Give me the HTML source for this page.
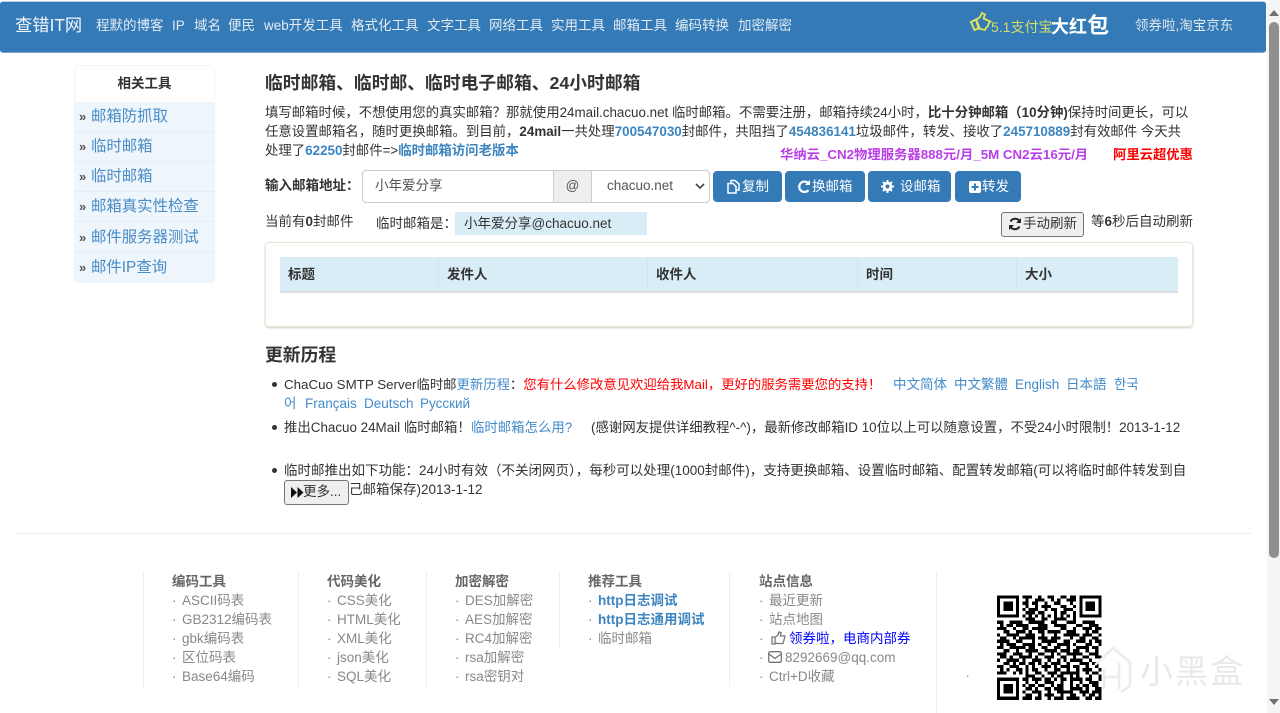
<!DOCTYPE html>
<html lang="zh">
<head>
<meta charset="utf-8">
<title>临时邮箱</title>
<style>
html,body{margin:0;padding:0;background:#fff;overflow:hidden}
body{width:1280px;height:713px;position:relative;font-family:"Liberation Sans","Noto Sans CJK SC",sans-serif;font-size:13.5px;color:#333;filter:blur(.3px)}
.t{position:absolute;white-space:nowrap;line-height:20px;margin-top:1px}
a,.l{color:#428bca;text-decoration:none}
.b{position:absolute}
.nav{color:#e3ebf3;top:15px}
.side{position:absolute;left:74px;width:141px;background:#eef5fb;border-bottom:1px solid #e6edf3;box-sizing:border-box}
.side i{position:absolute;left:5px;top:4px;font-style:normal;font-size:13px;font-weight:bold;color:#555;line-height:22px}
.side span{position:absolute;left:17px;top:3px;font-size:15.4px;line-height:24px;color:#4a8cc6;white-space:nowrap}
.btn{position:absolute;top:171px;height:31px;background:#337ab7;border:1px solid #337ab7;border-radius:4px;box-sizing:border-box;color:#fff;line-height:29px;white-space:nowrap}
.btn svg{position:absolute;top:7px}
.btn span{position:absolute;top:0}
.th{position:absolute;top:257px;height:36px;background:#d9edf7;border-bottom:2px solid #ddd;border-right:1px solid #d2e4ec;box-sizing:border-box;font-weight:bold;padding-left:8px;line-height:36px}
.v{position:absolute;width:1px;background:#eee}
.ft{color:#666;font-weight:bold}
.fi{color:#888}
.fi i{display:inline-block;width:10px;font-style:normal}
.p{font-size:13.4px}
</style>
</head>
<body>
<div class="b" style="left:0;top:1px;width:1266px;height:52px;background:#337ab7;border-top:1px solid #b9cfe2;border-bottom:1px solid #7aa6cf;box-sizing:border-box;border-radius:3px"></div>
<div class="t" style="left:15px;top:14px;font-size:17.3px;color:#f2f6fa">查错IT网</div>
<div class="t nav" style="left:96px">程默的博客</div>
<div class="t nav" style="left:172px">IP</div>
<div class="t nav" style="left:194px">域名</div>
<div class="t nav" style="left:228px">便民</div>
<div class="t nav" style="left:264px">web开发工具</div>
<div class="t nav" style="left:351px">格式化工具</div>
<div class="t nav" style="left:427px">文字工具</div>
<div class="t nav" style="left:489px">网络工具</div>
<div class="t nav" style="left:551px">实用工具</div>
<div class="t nav" style="left:613px">邮箱工具</div>
<div class="t nav" style="left:675px">编码转换</div>
<div class="t nav" style="left:738px">加密解密</div>
<svg class="b" style="left:969px;top:12px" width="24" height="22" viewBox="0 0 24 22"><path d="M7 8l4-3 2-4 3 1.500-1.500 4 7 3-2 2-.5 2.500-2 2-1 2-6.500-1.500z" fill="none" stroke="#dfe35e" stroke-width="1.800"/><path d="M2 10l5-2.500 3.500 8.500-5 2z" fill="none" stroke="#dfe35e" stroke-width="2"/></svg>
<div class="t" style="left:991px;top:16px;font-size:14px;color:#d5dd6a">5.1支付宝</div>
<div class="t" style="left:1051px;top:15px;font-size:18px;font-weight:bold;color:#fff">大红<span style="font-size:22px">包</span></div>
<div class="t" style="left:1135px;top:15px;color:#dfe7ef">领券啦,淘宝京东</div>

<div class="b" style="left:1267px;top:0;width:13px;height:713px;background:#f5f5f5"></div>
<div class="b" style="left:1269px;top:22px;width:10px;height:536px;background:#8f8f8f;border-radius:5px"></div>
<svg class="b" style="left:1268px;top:9px" width="12" height="8"><path d="M6 1l5 6H1z" fill="#6f6f6f"/></svg>
<svg class="b" style="left:1268px;top:698px" width="12" height="8"><path d="M6 7L1 1h10z" fill="#6f6f6f"/></svg>

<div class="b" style="left:74px;top:65px;width:141px;height:37px;border:1px solid #f5f5f5;border-bottom:none;box-sizing:border-box;border-radius:4px 4px 0 0;text-align:center;font-weight:bold;line-height:35px;color:#333">相关工具</div>
<div class="side" style="top:102px;height:30px"><i>»</i><span style="top:3px">邮箱防抓取</span></div>
<div class="side" style="top:132px;height:30px"><i>»</i><span style="top:3px">临时邮箱</span></div>
<div class="side" style="top:162px;height:30px"><i>»</i><span style="top:3px">临时邮箱</span></div>
<div class="side" style="top:192px;height:30px"><i>»</i><span style="top:3px">邮箱真实性检查</span></div>
<div class="side" style="top:222px;height:30px"><i style="top:5px">»</i><span style="top:4px">邮件服务器测试</span></div>
<div class="side" style="top:252px;height:31px;border-radius:0 0 4px 4px;border-bottom:none"><i style="top:5px">»</i><span style="top:4px">邮件IP查询</span></div>

<div class="t" style="left:265px;top:72px;font-size:17.8px;font-weight:bold">临时邮箱、临时邮、临时电子邮箱、24小时邮箱</div>
<div class="t p" style="left:265px;top:102px">填写邮箱时候&#65292;不想使用您的真实邮箱&#65311;那就使用24mail.chacuo.net 临时邮箱。不需要注册&#65292;邮箱持续24小时&#65292;<b>比十分钟邮箱&#65288;10分钟)</b>保持时间更长&#65292;可以</div>
<div class="t p" style="left:265px;top:121px">任意设置邮箱名&#65292;随时更换邮箱。到目前&#65292;<b>24mail</b>一共处理<b style="color:#3d85c0">700547030</b>封邮件&#65292;共阻挡了<b style="color:#3d85c0">454836141</b>垃圾邮件&#65292;转发、接收了<b style="color:#3d85c0">245710889</b>封有效邮件 今天共</div>
<div class="t p" style="left:265px;top:140px">处理了<b style="color:#3d85c0">62250</b>封邮件=&gt;<b style="color:#3d85c0">临时邮箱访问老版本</b></div>
<div class="t" style="left:780px;top:144px;font-size:13.33px;font-weight:bold;color:#b93ee8">华纳云_CN2物理服务器888元/月_5M CN2云16元/月</div>
<div class="t" style="left:1113px;top:144px;font-size:13.33px;font-weight:bold;color:#f00">阿里云超优惠</div>

<div class="t" style="left:265px;top:175px;font-weight:bold">输入邮箱地址&#65306;</div>
<div class="b" style="left:362px;top:170px;width:348px;height:33px;border:1px solid #ccc;border-radius:4px;box-sizing:border-box"></div>
<div class="t" style="left:375px;top:175px;color:#555">小年爱分享</div>
<div class="b" style="left:553px;top:171px;width:39px;height:31px;background:#eee;border-left:1px solid #ccc;border-right:1px solid #ccc;box-sizing:border-box;text-align:center;line-height:30px;color:#555">@</div>
<div class="t" style="left:607px;top:175px;color:#555">chacuo.net</div>
<svg class="b" style="left:695px;top:183px" width="10" height="7"><path d="M1 1l4 4 4-4" fill="none" stroke="#444" stroke-width="1.600"/></svg>

<div class="btn" style="left:713px;width:69px"><svg style="left:12px" width="15" height="15" viewBox="0 0 15 15"><path d="M5 4V1.500h4L13 5v6h-3M2 4.500h5l3 3V14H2z" fill="none" stroke="#fff" stroke-width="1.500"/></svg><span style="left:28px">复制</span></div>
<div class="btn" style="left:785px;width:80px"><svg style="left:11px" width="14" height="15" viewBox="0 0 14 15"><path d="M11.500 4.500A5.200 5.200 0 1 0 11.500 11" fill="none" stroke="#fff" stroke-width="2.200"/><path d="M13 1v5H8z" fill="#fff"/></svg><span style="left:26px">换邮箱</span></div>
<div class="btn" style="left:868px;width:83px"><svg style="left:11px" width="15" height="15" viewBox="0 0 15 15"><circle cx="7.500" cy="7.500" r="3.500" fill="none" stroke="#fff" stroke-width="2.500"/><path d="M7.500 1v13M1 7.500h13M3 3l9 9M12 3l-9 9" stroke="#fff" stroke-width="2"/><circle cx="7.500" cy="7.500" r="2" fill="#337ab7"/></svg><span style="left:31px">设邮箱</span></div>
<div class="btn" style="left:955px;width:66px"><svg style="left:12px" width="14" height="15" viewBox="0 0 14 15"><rect x="1" y="2" width="12" height="12" rx="2" fill="#fff"/><path d="M7 4.500v7M3.500 8h7" stroke="#337ab7" stroke-width="2"/></svg><span style="left:26px">转发</span></div>

<div class="t" style="left:265px;top:211px">当前有<b>0</b>封邮件</div>
<div class="t" style="left:376px;top:213px">临时邮箱是&#65306;</div>
<div class="b" style="left:455px;top:212px;width:192px;height:23px;background:#d9edf7"></div>
<div class="t" style="left:464px;top:213px">小年爱分享@chacuo.net</div>
<div class="b" style="left:1001px;top:212px;width:83px;height:25px;background:#efefef;border:1px solid #767676;border-radius:3px;box-sizing:border-box"></div>
<svg class="b" style="left:1008px;top:217px" width="14" height="14" viewBox="0 0 14 14"><path d="M12 5A5.300 5.300 0 0 0 2.500 4.500M2 9a5.300 5.300 0 0 0 9.500.500" fill="none" stroke="#222" stroke-width="2"/><path d="M13 1v5H8zM1 13V8h5z" fill="#222"/></svg>
<div class="t" style="left:1023px;top:213px;color:#333">手动刷新</div>
<div class="t" style="left:1091px;top:211px">等<b>6</b>秒后自动刷新</div>

<div class="b" style="left:265px;top:242px;width:928px;height:85px;border:1px solid #e3e8d8;border-radius:4px;box-sizing:border-box;box-shadow:0 1px 2px #c9d2bf"></div>
<div class="th" style="left:280px;width:159px">标题</div>
<div class="th" style="left:439px;width:209px">发件人</div>
<div class="th" style="left:648px;width:210px">收件人</div>
<div class="th" style="left:858px;width:159px">时间</div>
<div class="th" style="left:1017px;width:161px;border-right:none">大小</div>

<div class="t" style="left:265px;top:344px;font-size:17.8px;font-weight:bold">更新历程</div>

<div class="b" style="left:272px;top:382px;width:5px;height:5px;border-radius:50%;background:#333"></div>
<div class="t" style="left:284px;top:374px;font-size:13.35px">ChaCuo SMTP Server临时邮<span class="l">更新历程</span>&#65306;<span style="color:#f00">您有什么修改意见欢迎给我Mail&#65292;更好的服务需要您的支持&#65281;</span></div>
<div class="t l" style="left:893px;top:374px">中文简体</div>
<div class="t l" style="left:954px;top:374px">中文繁體</div>
<div class="t l" style="left:1015px;top:374px">English</div>
<div class="t l" style="left:1066px;top:374px">日本語</div>
<div class="t l" style="left:1114px;top:374px;font-family:'Liberation Sans','Noto Sans CJK KR',sans-serif">한국</div>
<div class="t l" style="left:284px;top:393px;font-family:'Liberation Sans','Noto Sans CJK KR',sans-serif">어</div>
<div class="t l" style="left:305px;top:393px">Français</div>
<div class="t l" style="left:364px;top:393px">Deutsch</div>
<div class="t l" style="left:420px;top:393px">Русский</div>

<div class="b" style="left:272px;top:425px;width:5px;height:5px;border-radius:50%;background:#333"></div>
<div class="t p" style="left:284px;top:417px">推出Chacuo 24Mail 临时邮箱&#65281;</div>
<div class="t l p" style="left:471px;top:417px">临时邮箱怎么用?</div>
<div class="t p" style="left:591px;top:417px">(感谢网友提供详细教程^-^)&#65292;最新修改邮箱ID 10位以上可以随意设置&#65292;不受24小时限制&#65281;2013-1-12</div>

<div class="b" style="left:272px;top:468px;width:5px;height:5px;border-radius:50%;background:#333"></div>
<div class="t" style="left:284px;top:460px">临时邮推出如下功能&#65306;24小时有效&#65288;不关闭网页&#65289;&#65292;每秒可以处理(1000封邮件)&#65292;支持更换邮箱、设置临时邮箱、配置转发邮箱(可以将临时邮件转发到自</div>
<div class="b" style="left:284px;top:480px;width:65px;height:25px;background:#efefef;border:1px solid #767676;border-radius:3px;box-sizing:border-box"></div>
<svg class="b" style="left:291px;top:486px" width="13" height="13" viewBox="0 0 13 13"><path d="M0 1l6 5.500L0 12zM6.500 1l6 5.500-6 5.500z" fill="#111"/></svg>
<div class="t" style="left:303px;top:481px;color:#333">更多...</div>
<div class="t" style="left:349px;top:479px">己邮箱保存)2013-1-12</div>

<div class="b" style="left:15px;top:533px;width:1236px;height:1px;background:#eee"></div>

<div class="v" style="left:143px;top:572px;height:115px"></div>
<div class="v" style="left:298px;top:572px;height:115px"></div>
<div class="v" style="left:426px;top:572px;height:115px"></div>
<div class="v" style="left:559px;top:572px;height:76px"></div>
<div class="v" style="left:729px;top:572px;height:115px"></div>
<div class="v" style="left:936px;top:572px;height:141px"></div>

<div class="t ft" style="left:172px;top:571px">编码工具</div>
<div class="t fi" style="left:172px;top:590px"><i>·</i>ASCII码表</div>
<div class="t fi" style="left:172px;top:609px"><i>·</i>GB2312编码表</div>
<div class="t fi" style="left:172px;top:628px"><i>·</i>gbk编码表</div>
<div class="t fi" style="left:172px;top:647px"><i>·</i>区位码表</div>
<div class="t fi" style="left:172px;top:666px"><i>·</i>Base64编码</div>

<div class="t ft" style="left:327px;top:571px">代码美化</div>
<div class="t fi" style="left:327px;top:590px"><i>·</i>CSS美化</div>
<div class="t fi" style="left:327px;top:609px"><i>·</i>HTML美化</div>
<div class="t fi" style="left:327px;top:628px"><i>·</i>XML美化</div>
<div class="t fi" style="left:327px;top:647px"><i>·</i>json美化</div>
<div class="t fi" style="left:327px;top:666px"><i>·</i>SQL美化</div>

<div class="t ft" style="left:455px;top:571px">加密解密</div>
<div class="t fi" style="left:455px;top:590px"><i>·</i>DES加解密</div>
<div class="t fi" style="left:455px;top:609px"><i>·</i>AES加解密</div>
<div class="t fi" style="left:455px;top:628px"><i>·</i>RC4加解密</div>
<div class="t fi" style="left:455px;top:647px"><i>·</i>rsa加解密</div>
<div class="t fi" style="left:455px;top:666px"><i>·</i>rsa密钥对</div>

<div class="t ft" style="left:588px;top:571px">推荐工具</div>
<div class="t fi" style="left:588px;top:590px"><i>·</i><b style="color:#3d85c0">http日志调试</b></div>
<div class="t fi" style="left:588px;top:609px"><i>·</i><b style="color:#3d85c0">http日志通用调试</b></div>
<div class="t fi" style="left:588px;top:628px"><i>·</i>临时邮箱</div>

<div class="t ft" style="left:759px;top:571px">站点信息</div>
<div class="t fi" style="left:759px;top:590px"><i>·</i>最近更新</div>
<div class="t fi" style="left:759px;top:609px"><i>·</i>站点地图</div>
<div class="t fi" style="left:759px;top:628px"><i>·</i></div>
<svg class="b" style="left:771px;top:631px" width="15" height="14" viewBox="0 0 15 14"><path d="M1 6h3v7H1zM4 6.500l3-2.500 1-3 2 .500-.500 3.500H14l-.500 2-1.500 5.500H6L4 11.500z" fill="none" stroke="#777" stroke-width="1.300"/></svg>
<div class="t" style="left:789px;top:628px;color:#00f">领券啦&#65292;电商内部券</div>
<div class="t fi" style="left:759px;top:647px"><i>·</i></div>
<svg class="b" style="left:768px;top:651px" width="14" height="12" viewBox="0 0 14 12"><rect x=".7" y=".7" width="12.600" height="10.600" rx="1.500" fill="none" stroke="#777" stroke-width="1.300"/><path d="M1 3l6 4.500L13 3" fill="none" stroke="#777" stroke-width="1.300"/></svg>
<div class="t fi" style="left:785px;top:647px">8292669@qq.com</div>
<div class="t fi" style="left:759px;top:666px"><i>·</i>Ctrl+D收藏</div>

<div class="t" style="left:966px;top:662px;font-size:12px;color:#777">.</div>

<svg class="b" style="left:997px;top:595px" width="104.500" height="105" viewBox="0 0 33 33" shape-rendering="crispEdges"><path stroke="#000" stroke-width="1" fill="none" d="M0 .5h7M26 .5h7M0 1.500h1M6 1.500h1M26 1.500h1M32 1.500h1M0 2.500h1M2 2.500h3M6 2.500h1M26 2.500h1M28 2.500h3M32 2.500h1M0 3.500h1M2 3.500h3M6 3.500h1M26 3.500h1M28 3.500h3M32 3.500h1M0 4.500h1M2 4.500h3M6 4.500h1M26 4.500h1M28 4.500h3M32 4.500h1M0 5.500h1M6 5.500h1M26 5.500h1M32 5.500h1M0 6.500h7M26 6.500h7
M8 .5h3M13 .5h1M16 .5h2M20 .5h2M23 .5h2M9 1.500h1M12 1.500h3M17 1.500h1M19 1.500h1M22 1.500h3M8 2.500h2M11 2.500h2M15 2.500h1M18 2.500h2M23 2.500h1M9 3.500h1M12 3.500h1M14 3.500h3M20 3.500h2M24 3.500h1M8 4.500h1M10 4.500h3M15 4.500h1M17 4.500h2M21 4.500h3M9 5.500h3M13 5.500h2M18 5.500h1M20 5.500h2M24 5.500h1M8 6.500h1M10 6.500h1M12 6.500h1M14 6.500h1M16 6.500h1M18 6.500h1M20 6.500h1M22 6.500h1M24 6.500h1M9 7.500h3M14 7.500h2M18 7.500h4M24 7.500h1
M0 8.500h2M4 8.500h4M10 8.500h5M17 8.500h2M22 8.500h3M27 8.500h4M1 9.500h1M3 9.500h2M6 9.500h4M13 9.500h3M18 9.500h4M25 9.500h2M29 9.500h3M0 10.500h3M5 10.500h1M8 10.500h2M11 10.500h5M20 10.500h2M24 10.500h1M27 10.500h3M31 10.500h2M2 11.500h2M6 11.500h3M10 11.500h1M13 11.500h2M16 11.500h4M22 11.500h3M28 11.500h1M30 11.500h2M0 12.500h1M3 12.500h4M9 12.500h3M14 12.500h1M18 12.500h1M21 12.500h5M27 12.500h3M32 12.500h1M1 13.500h2M5 13.500h1M7 13.500h5M13 13.500h3M17 13.500h3M23 13.500h1M26 13.500h2M30 13.500h2M0 14.500h4M6 14.500h2M11 14.500h1M14 14.500h5M21 14.500h2M25 14.500h3M29 14.500h1M31 14.500h2M1 15.500h1M3 15.500h3M8 15.500h4M13 15.500h1M16 15.500h1M19 15.500h4M24 15.500h1M28 15.500h2M32 15.500h1M0 16.500h2M4 16.500h5M10 16.500h2M14 16.500h2M18 16.500h2M22 16.500h1M25 16.500h4M30 16.500h2M2 17.500h2M6 17.500h1M9 17.500h4M15 17.500h4M20 17.500h3M24 17.500h2M28 17.500h1M31 17.500h1M0 18.500h3M5 18.500h3M10 18.500h1M13 18.500h2M17 18.500h1M19 18.500h1M22 18.500h5M29 18.500h3M1 19.500h2M4 19.500h1M7 19.500h4M12 19.500h1M15 19.500h3M20 19.500h2M24 19.500h1M27 19.500h2M31 19.500h2M0 20.500h1M3 20.500h4M8 20.500h1M11 20.500h3M16 20.500h1M19 20.500h1M21 20.500h1M23 20.500h4M29 20.500h1M2 21.500h2M5 21.500h1M7 21.500h2M10 21.500h2M13 21.500h1M15 21.500h1M17 21.500h3M22 21.500h1M26 21.500h3M30 21.500h2M0 22.500h2M4 22.500h3M9 22.500h1M11 22.500h1M14 22.500h3M18 22.500h1M20 22.500h3M24 22.500h2M28 22.500h1M31 22.500h1M1 23.500h1M3 23.500h1M6 23.500h2M9 23.500h1M11 23.500h2M15 23.500h1M18 23.500h2M22 23.500h1M25 23.500h1M27 23.500h3M32 23.500h1M0 24.500h3M5 24.500h1M7 24.500h1M9 24.500h1M12 24.500h2M16 24.500h3M20 24.500h6M28 24.500h1M30 24.500h2M9 25.500h3M14 25.500h1M17 25.500h1M19 25.500h2M23 25.500h1M25 25.500h1M29 25.500h1M32 25.500h1
M0 26.500h7M0 27.500h1M6 27.500h1M0 28.500h1M2 28.500h3M6 28.500h1M0 29.500h1M2 29.500h3M6 29.500h1M0 30.500h1M2 30.500h3M6 30.500h1M0 31.500h1M6 31.500h1M0 32.500h7
M8 26.500h2M11 26.500h3M15 26.500h2M18 26.500h1M20 26.500h2M23 26.500h4M28 26.500h2M32 26.500h1M9 27.500h1M12 27.500h1M15 27.500h3M20 27.500h1M23 27.500h1M26 27.500h1M29 27.500h3M8 28.500h1M10 28.500h2M13 28.500h2M17 28.500h1M19 28.500h2M23 28.500h1M25 28.500h1M27 28.500h2M30 28.500h2M9 29.500h2M12 29.500h1M15 29.500h2M18 29.500h3M23 29.500h4M28 29.500h1M31 29.500h2M8 30.500h1M11 30.500h3M16 30.500h1M19 30.500h5M26 30.500h3M30 30.500h3M9 31.500h2M13 31.500h1M15 31.500h3M20 31.500h1M23 31.500h2M27 31.500h1M29 31.500h2M32 31.500h1M8 32.500h3M12 32.500h2M16 32.500h1M18 32.500h3M22 32.500h4M28 32.500h2M31 32.500h2"/></svg>

<svg class="b" style="left:1093px;top:645px" width="40" height="50" viewBox="0 0 40 50"><path d="M2 20L20 3l17 14v24l-9 6M11 24v20M11 32h15M26 18v26" fill="none" stroke="#ececec" stroke-width="2.500"/></svg>
<div class="t" style="left:1140px;top:653px;font-size:33px;line-height:36px;letter-spacing:2px;color:#e9e9e9">小黑盒</div>
</body>
</html>
